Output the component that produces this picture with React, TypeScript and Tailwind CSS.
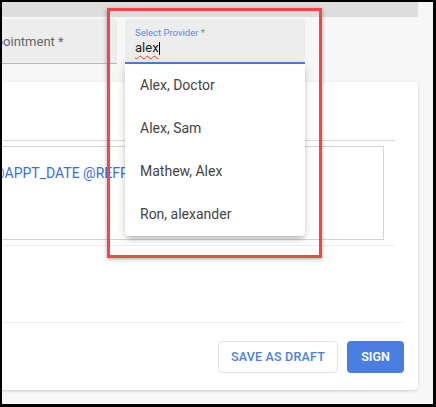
const providers = ['Alex, Doctor', 'Alex, Sam', 'Mathew, Alex', 'Ron, alexander']

export default function App() {
  return (
    <div className="w-[436px] h-[407px] bg-black pt-[2px] pl-[2px] pr-[3px] pb-[3px]">
      <div className="relative w-full h-full overflow-hidden bg-[#f7f7f7] font-['Roboto',sans-serif]">
        {/* top bar */}
        <div className="h-[15px] w-[416px] bg-[#dddddd]" />

        {/* fields */}
        <div className="mt-[2px] ml-[-60px] flex gap-[8px]">
          <div className="w-[175px] h-[45px] rounded-t-[4px] bg-[#ededed] border-b border-[#b8b8b8] flex items-center pl-[38px] pt-[2px]">
            <span className="text-[13px] text-[#666]">Appointment *</span>
          </div>
          <div className="w-[180px] h-[45px] rounded-t-[4px] bg-[#ededed] border-b-2 border-[#4a7fe0] pl-[10px] pt-[8px]">
            <div className="text-[9.5px] leading-[12px] text-[#5a8ae6]">
              Select Provider <span className="text-[#3f9e93]">*</span>
            </div>
            <div className="mt-[1px] flex items-center text-[13px] leading-[16px] text-[#222]">
              <span className="underline decoration-wavy decoration-[#e53935] decoration-1 underline-offset-[3px]">alex</span>
              <span className="w-px h-[13px] bg-black" />
            </div>
          </div>
        </div>

        {/* card */}
        <div className="mt-[18px] ml-[-30px] w-[446px] h-[308px] bg-white rounded-[4px] shadow-[0_1px_3px_rgba(0,0,0,0.18)] pl-[8px] pr-[14px] flex flex-col">
          <div className="h-[58px]" />
          <div className="mr-[9px]">
            <div className="border-t border-[#dadada]" />
            <div className="mt-[5px] mr-[11px] h-[94px] border border-[#d3d3d3] pl-[11px] pt-[14px]">
              <span className="text-[14px] leading-[20px] text-[#3a6ee0]">@APPT_DATE @REFPROVIDER</span>
            </div>
            <div className="mt-[5px] border-t border-[#ececec]" />
          </div>
          <div className="mt-[76px] border-t border-[#efefef]" />
          <div className="mt-[18px] flex justify-end gap-[9px]">
            <button className="w-[120px] h-[32px] rounded-[4px] border border-[#e2e2e2] bg-white text-[12.5px] font-medium tracking-[0.2px] text-[#4a7fe0]">
              SAVE AS DRAFT
            </button>
            <button className="w-[57px] h-[32px] rounded-[4px] bg-[#4a7fe1] text-[12.5px] font-semibold text-white">
              SIGN
            </button>
          </div>
        </div>

        {/* dropdown list */}
        <div className="absolute left-[123px] top-[62px] w-[180px] bg-white rounded-b-[4px] shadow-[0_4px_6px_-2px_rgba(0,0,0,0.25),0_2px_10px_1px_rgba(0,0,0,0.1)]">
          {providers.map((p) => (
            <div key={p} className="h-[43px] flex items-center pl-[15px] text-[14px] text-[#444]">
              {p}
            </div>
          ))}
        </div>

        {/* annotation rectangle */}
        <div className="absolute left-[105px] top-[6px] w-[215px] h-[250px] border-[3px] border-[#f04848] shadow-[0_1px_4px_rgba(0,0,0,0.35)] pointer-events-none" />
      </div>
    </div>
  )
}
